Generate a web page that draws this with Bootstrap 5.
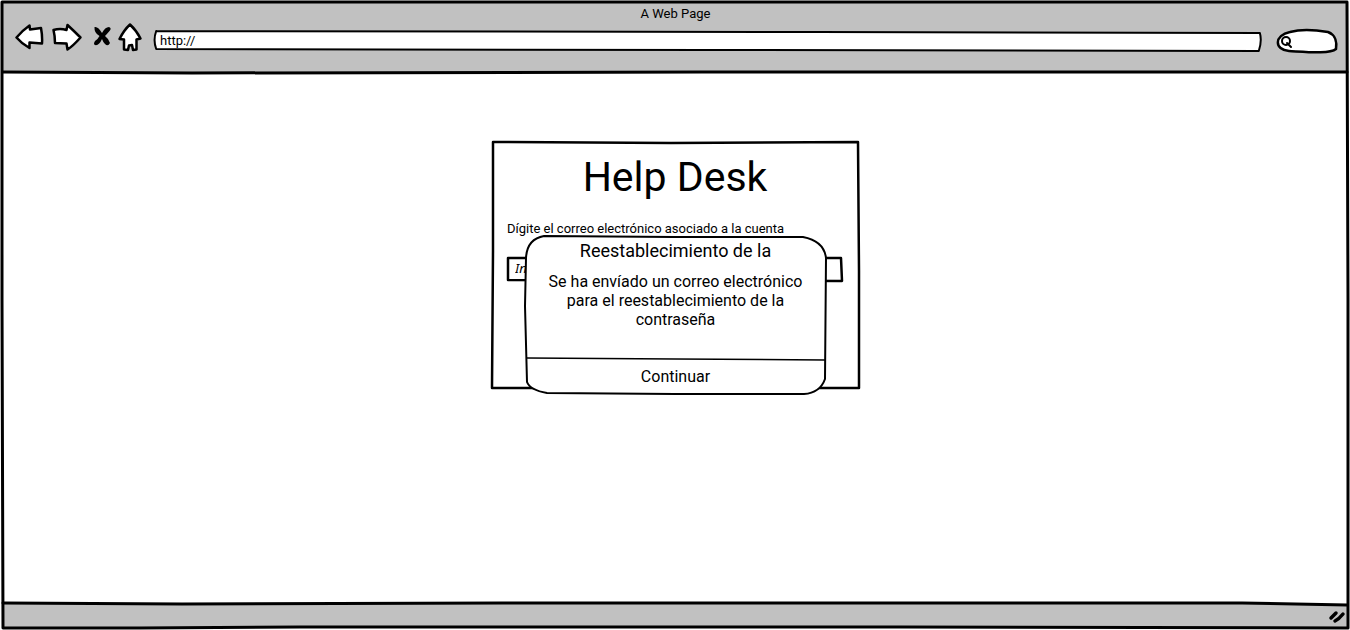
<!DOCTYPE html>
<html lang="es">
<head>
<meta charset="utf-8">
<meta name="viewport" content="width=device-width, initial-scale=1">
<title>Help Desk</title>
<link href="https://cdn.jsdelivr.net/npm/bootstrap@5.3.0/dist/css/bootstrap.min.css" rel="stylesheet">
<style>
body { font-family: Roboto, Lato, sans-serif; color: #000; background: #fff; font-size: 16px; line-height: 19px; font-variant-ligatures: none; }
.browser { min-height: 100vh; padding: 2px; }
.browser-top, .browser-foot { background: #c1c1c1; }
.browser-top { height: 71px; padding: 3px 11px 0 12px; }
.browser-title { font-size: 13px; line-height: 17px; }
.browser-foot { height: 25px; padding: 0 2px; }
.toolbar { height: 30px; padding-left: 1px; }
.tool { width: 30px; height: 30px; line-height: 0; }
.tool-narrow { width: 24px; }
.sketch { position: absolute; inset: 0; width: 100%; height: 100%; overflow: visible; fill: none; stroke: #000; stroke-width: 3; stroke-linejoin: round; stroke-linecap: round; pointer-events: none; }
.sketch path { vector-effect: non-scaling-stroke; }
.sketch-thin { stroke-width: 2; }
.filled { fill: #fff; }
.plain { border: 0; background: transparent; outline: 0; color: #000; padding: 0; }
.address { height: 20px; margin-left: 11px; }
.address input { font-size: 13px; line-height: 16px; padding: 0 0 2px 6px; }
.finder { width: 60px; height: 24px; }
.finder input { padding-left: 20px; font-size: 13px; }
.panel { width: 368px; height: 249px; margin-top: 68px; padding: 12px 16px; }
.panel h1 { font-size: 41px; line-height: 48px; font-weight: 400; }
.panel label { font-size: 13px; line-height: 16px; margin-top: 20px; }
.mail { height: 24px; margin-top: 20px; }
.mail input { font-size: 13px; font-style: italic; padding: 0 0 2px 8px; font-family: "Noto Sans", sans-serif; }
.mail input::placeholder { color: #000; }
.dialog-box { width: 301px; height: 158px; top: 95px; left: 34px; padding: 5px 10px 2px; }
.dialog-box h2 { font-size: 18px; line-height: 20px; font-weight: 400; margin-bottom: 11px; }
.dialog-box button { height: 32px; }
</style>
</head>
<body>
<div class="browser d-flex flex-column position-relative">
  <header class="browser-top position-relative">
    <div class="browser-title text-center">A Web Page</div>
    <div class="toolbar d-flex align-items-center">
      <button class="plain tool" aria-label="Atrás"><svg width="30" height="30" viewBox="0 0 30 30" fill="#fff" stroke="#000" stroke-width="2.500" stroke-linejoin="round"><path d="M1.500 15.500Q8 8 14.500 3.500L15 7.500L26 6Q27.500 14 27 21.500L14.500 20.500L14.500 26Q7 22 1.500 15.500Z"/></svg></button>
      <button class="plain tool ms-2" aria-label="Adelante"><svg class="overflow-visible" width="30" height="30" viewBox="0 0 30 30" fill="#fff" stroke="#000" stroke-width="2.500" stroke-linejoin="round"><path d="M.500 8Q7 6 13.500 8L14.500 3Q21 9 27.500 15.500Q20 24 14.500 27.500L13.500 21.500Q7 21 2 21Q2 14 .500 8Z"/></svg></button>
      <button class="plain tool tool-narrow ms-2" aria-label="Detener"><svg width="24" height="30" viewBox="0 0 24 30"><path d="M3.500 5Q7 4 11 11Q14 5 18 5Q21 6 18.500 9Q16 12 14 14Q18 17 19 21Q17 25 14 22Q12 20 11 17Q8 24 4 23Q2 22 4 19Q7 17 8.500 14Q3 11 3.500 5Z"/></svg></button>
      <button class="plain tool tool-narrow ms-1" aria-label="Inicio"><svg class="overflow-visible" width="24" height="30" viewBox="0 0 24 30" fill="#fff" stroke="#000" stroke-width="2.500" stroke-linejoin="round"><path d="M11 2.500Q17 8 21.500 16.500L17.500 17.500L17.500 27.500L14 28L13 23L10 23.500L9 28L5 27.500L5 17.500L.500 17Q5 8 11 2.500Z"/></svg></button>
      <div class="address position-relative flex-grow-1 mt-2">
        <svg class="sketch sketch-thin" viewBox="0 0 1000 20" preserveAspectRatio="none"><path class="filled" d="M2 0L600 1L999 2Q1001 10 998 20L500 19L2 18Q-1 9 2 0"/></svg>
        <input class="plain position-relative d-block w-100 h-100" type="text" value="http://" aria-label="Dirección">
      </div>
      <div class="finder position-relative ms-3 mt-2">
        <svg class="sketch sketch-thin" viewBox="0 0 60 24" preserveAspectRatio="none"><path class="filled" stroke-width="2.500" d="M12 22C-3 21-3 6 13 3C24 0 39 1 51 3C59 6 60 14 59 20C53 25 31 23 12 22Z"/><path d="M13 12A4 4 0 1 1 5 12A4 4 0 1 1 13 12M10 14L14 18"/></svg>
        <input class="plain position-relative d-block w-100 h-100" type="search" aria-label="Buscar">
      </div>
    </div>
    <svg class="sketch" viewBox="0 0 1346 71" preserveAspectRatio="none"><path d="M1 70L190 71L700 70L1345 70"/></svg>
  </header>
  <main class="flex-grow-1">
    <section class="panel position-relative mx-auto">
      <svg class="sketch" viewBox="0 0 368 249" preserveAspectRatio="none"><path class="filled" stroke-width="2.500" d="M2 1L180 2L367 1L368 130L368 247L190 247L1 247L2 110Z"/></svg>
      <div class="position-relative">
        <h1 class="text-center mb-0">Help Desk</h1>
        <label class="d-block" for="mail">Dígite el correo electrónico asociado a la cuenta</label>
        <div class="mail position-relative">
          <svg class="sketch" viewBox="0 0 336 24" preserveAspectRatio="none"><path stroke-width="2.500" d="M1 1L334 1L335 24L1 23Z"/></svg>
          <input class="plain position-relative d-block w-100 h-100" id="mail" type="email" placeholder="Ingrese">
        </div>
      </div>
      <div class="dialog-box position-absolute d-flex flex-column text-center" role="dialog" aria-labelledby="notice">
        <svg class="sketch sketch-thin" viewBox="0 0 301 158" preserveAspectRatio="none"><path class="filled" d="M19 0L150 1L278 1Q299 5 301 22L300 143Q295 157 279 158L150 158L22 157Q5 154 2 146L0 70L1 22Q2 3 19 0Z"/><path stroke-width="1.500" d="M2 122L150 123L300 124"/></svg>
        <h2 class="position-relative" id="notice">Reestablecimiento de la</h2>
        <p class="position-relative mb-0">Se ha envíado un correo electrónico para el reestablecimiento de la contraseña</p>
        <button class="plain position-relative mt-auto">Continuar</button>
      </div>
    </section>
  </main>
  <footer class="browser-foot position-relative d-flex justify-content-end align-items-center">
    <svg class="sketch" viewBox="0 0 1346 25" preserveAspectRatio="none"><path fill="#fff" stroke="none" d="M1240 -2H1346V2L1240 0Z"/><path d="M1 0L180 1L500 0L1240 0L1345 2"/></svg>
    <svg class="position-relative" width="18" height="16" viewBox="0 0 18 16" fill="none" stroke="#000" stroke-width="3.500" stroke-linecap="round"><path d="M3 10L8 5M7 13Q11 11 15 6"/></svg>
  </footer>
  <svg class="sketch" viewBox="0 0 1350 630" preserveAspectRatio="none"><path d="M2 2L600 2L1347 2L1348 300L1348 628L900 627L300 627L140 628L3 628L2 300Z"/></svg>
</div>
<script src="https://cdn.jsdelivr.net/npm/bootstrap@5.3.0/dist/js/bootstrap.bundle.min.js"></script>
</body>
</html>
